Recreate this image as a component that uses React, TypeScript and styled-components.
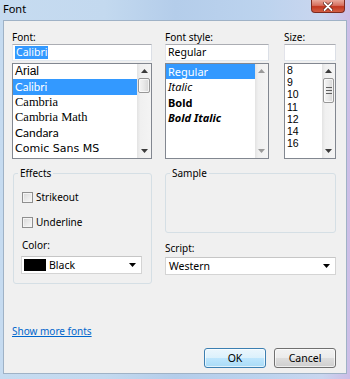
import React from 'react';
import styled, { createGlobalStyle } from 'styled-components';

const GlobalStyle = createGlobalStyle`
  html, body {
    margin: 0;
    padding: 0;
    background: #ffffff;
  }
  body {
    font-family: "Noto Sans", "Open Sans", sans-serif;
    color: #000;
  }
`;

const Window = styled.div`
  width: 350px;
  height: 379px;
  box-sizing: border-box;
  padding: 0 3px 5px 3px;
  display: flex;
  flex-direction: column;
  background: linear-gradient(
    to right,
    #c6dbf0 0%,
    #c3d9ef 30%,
    #b4cdea 50%,
    #bcd3ee 75%,
    #c9d6ef 92%,
    #cdbde6 100%
  );
`;

const TitleBar = styled.div`
  height: 20px;
  flex: none;
  display: flex;
  justify-content: space-between;
  align-items: flex-start;
`;

const Title = styled.div`
  font-size: 11px;
  line-height: 17px;
  color: #000;
`;

const CloseButton = styled.div`
  width: 34px;
  height: 13px;
  margin-right: 2px;
  box-sizing: border-box;
  border: 1px solid #7d2a20;
  border-top: none;
  border-radius: 0 0 4px 4px;
  background: linear-gradient(#e9a99c 0%, #d7705f 45%, #c2361f 55%, #d35f45 100%);
  display: flex;
  align-items: center;
  justify-content: center;
`;

const Client = styled.div`
  flex: 1;
  box-sizing: border-box;
  border: 1px solid #9fb2c6;
  background: #f0f0f0;
  padding: 10px 10px 5px 8px;
  display: flex;
  flex-direction: column;
`;

const TopRow = styled.div`
  display: flex;
`;

const Column = styled.div<{ $width: number; $gap?: number }>`
  width: ${(p) => p.$width}px;
  margin-right: ${(p) => p.$gap ?? 0}px;
  display: flex;
  flex-direction: column;
`;

const Label = styled.div`
  font-size: 10px;
  line-height: 12px;
  margin-bottom: 1px;
`;

const TextBox = styled.div`
  height: 17px;
  box-sizing: border-box;
  border: 1px solid;
  border-color: #abadb3 #dbdfe6 #e3e9ef #e2e3ea;
  background: #fff;
  padding: 0 2px;
  font-size: 10.5px;
  line-height: 13px;
  display: flex;
  align-items: center;
`;

const Selected = styled.span`
  background: #3399ff;
  color: #fff;
  padding: 0 1px;
  line-height: 13px;
`;

const ListBox = styled.div`
  margin-top: 2px;
  height: 96px;
  box-sizing: border-box;
  border: 1px solid #828790;
  background: #fff;
  display: flex;
  overflow: hidden;
`;

const Items = styled.div`
  flex: 1;
  display: flex;
  flex-direction: column;
`;

const ListItem = styled.div<{ $h: number; $selected?: boolean; $font?: string; $size?: number }>`
  height: ${(p) => p.$h}px;
  line-height: ${(p) => Math.floor(p.$h)}px;
  flex: none;
  display: flex;
  align-items: center;
  padding-left: 2px;
  white-space: nowrap;
  overflow: hidden;
  font-family: ${(p) => p.$font ?? '"Noto Sans", sans-serif'};
  font-size: ${(p) => p.$size ?? 11}px;
  background: ${(p) => (p.$selected ? '#3399ff' : 'transparent')};
  color: ${(p) => (p.$selected ? '#fff' : '#000')};
`;

const ScrollBar = styled.div<{ $width: number }>`
  width: ${(p) => p.$width}px;
  flex: none;
  display: flex;
  flex-direction: column;
  background: linear-gradient(to right, #e3e3e3 0%, #f0f0f0 25%, #f4f4f4 100%);
`;

const ScrollArrow = styled.div`
  height: 14px;
  flex: none;
  display: flex;
  align-items: center;
  justify-content: center;
`;

const Track = styled.div`
  flex: 1;
  display: flex;
  flex-direction: column;
  padding: 0 1px;
`;

const Thumb = styled.div<{ $h: number }>`
  height: ${(p) => p.$h}px;
  box-sizing: border-box;
  border: 1px solid #979797;
  border-radius: 2px;
  background: linear-gradient(to right, #f5f5f5 0%, #e8e8e8 50%, #d6d6d6 100%);
  box-shadow: inset 0 0 0 1px rgba(255, 255, 255, 0.7);
  display: flex;
  flex-direction: column;
  align-items: center;
  justify-content: center;
  gap: 2px;
`;

const Grip = styled.div`
  width: 6px;
  height: 1px;
  background: #606060;
`;

const BottomRow = styled.div`
  display: flex;
  align-items: flex-start;
  margin-top: 8px;
`;

const Group = styled.fieldset<{ $width: number; $height: number }>`
  margin: 0;
  width: ${(p) => p.$width}px;
  height: ${(p) => p.$height}px;
  box-sizing: border-box;
  border: 1px solid #d5dfe5;
  border-radius: 3px;
  padding: 0 8px 9px 8px;
  display: flex;
  flex-direction: column;
`;

const Legend = styled.legend`
  font-size: 10px;
  line-height: 12px;
  padding: 0 2px;
  margin-left: -4px;
`;

const CheckRow = styled.div<{ $top: number }>`
  display: flex;
  align-items: center;
  height: 14px;
  line-height: 12px;
  margin-top: ${(p) => p.$top}px;
  font-size: 10px;
  gap: 3px;
`;

const CheckBox = styled.div`
  width: 11px;
  height: 11px;
  box-sizing: border-box;
  border: 1px solid #8f8f8f;
  background: linear-gradient(135deg, #d8d8d8 0%, #e9e9e9 50%, #f8f8f8 100%);
  box-shadow: inset 0 0 0 1px #f4f4f4;
`;

const FieldLabel = styled(Label)<{ $top: number }>`
  margin-top: ${(p) => p.$top}px;
`;

const Combo = styled.div<{ $width?: number }>`
  height: 18px;
  width: ${(p) => (p.$width ? `${p.$width}px` : 'auto')};
  margin-top: 2px;
  box-sizing: border-box;
  border: 1px solid #d4d4d4;
  border-top-color: #c6c6c6;
  background: #fff;
  display: flex;
  align-items: center;
  padding: 0 5px 0 2px;
  font-size: 10.5px;
  line-height: 13px;
`;

const ComboText = styled.span`
  flex: 1;
  margin-left: 3px;
`;

const Swatch = styled.div`
  width: 22px;
  height: 12px;
  background: #000;
`;

const RightColumn = styled.div`
  width: 171px;
  margin-left: 13px;
  display: flex;
  flex-direction: column;
`;

const MoreLink = styled.a`
  margin-top: auto;
  margin-bottom: 11px;
  align-self: flex-start;
  font-size: 10px;
  line-height: 12px;
  color: #0066cc;
  text-decoration: underline;
  cursor: pointer;
`;

const ButtonRow = styled.div`
  display: flex;
  justify-content: flex-end;
  gap: 8px;
`;

const Button = styled.button<{ $default?: boolean }>`
  width: 62px;
  height: 20px;
  margin: 0;
  padding: 0;
  box-sizing: border-box;
  border-radius: 3px;
  font-family: "Noto Sans", sans-serif;
  font-size: 10.5px;
  line-height: 13px;
  color: #000;
  border: 1px solid ${(p) => (p.$default ? '#3c7fb1' : '#707070')};
  background: ${(p) =>
    p.$default
      ? 'linear-gradient(#ebf6fd 0%, #dbf1fc 50%, #bee6fd 51%, #a9dbf6 100%)'
      : 'linear-gradient(#f2f2f2 0%, #ebebeb 50%, #dddddd 51%, #cfcfcf 100%)'};
  box-shadow: inset 0 0 0 1px rgba(255, 255, 255, 0.65);
`;

const ArrowUp = ({ color = '#3c3c3c' }: { color?: string }) => (
  <svg width="7" height="4" viewBox="0 0 7 4">
    <polygon points="0,4 3.5,0 7,4" fill={color} />
  </svg>
);

const ArrowDown = ({ color = '#3c3c3c' }: { color?: string }) => (
  <svg width="7" height="4" viewBox="0 0 7 4">
    <polygon points="0,0 7,0 3.5,4" fill={color} />
  </svg>
);

function VScroll({ width, thumb, grip, arrowColor }: { width: number; thumb?: number; grip?: boolean; arrowColor?: string }) {
  return (
    <ScrollBar $width={width}>
      <ScrollArrow>
        <ArrowUp color={arrowColor} />
      </ScrollArrow>
      <Track>
        {thumb ? (
          <Thumb $h={thumb}>
            {grip && (
              <>
                <Grip />
                <Grip />
                <Grip />
              </>
            )}
          </Thumb>
        ) : null}
      </Track>
      <ScrollArrow>
        <ArrowDown color={arrowColor} />
      </ScrollArrow>
    </ScrollBar>
  );
}

const fontList = [
  { name: 'Arial', font: '"Liberation Sans", Arial, sans-serif', size: 12 },
  { name: 'Calibri', font: 'Lato, "Open Sans", sans-serif', size: 11.5 },
  { name: 'Cambria', font: '"Liberation Serif", serif', size: 12.5 },
  { name: 'Cambria Math', font: '"Liberation Serif", serif', size: 12.5 },
  { name: 'Candara', font: 'Lato, sans-serif', size: 12 },
  { name: 'Comic Sans MS', font: '"DejaVu Sans", sans-serif', size: 11 },
];

const styleList = [
  { name: 'Regular', weight: 400, italic: false },
  { name: 'Italic', weight: 400, italic: true },
  { name: 'Bold', weight: 700, italic: false },
  { name: 'Bold Italic', weight: 700, italic: true },
];

const StyleItem = styled(ListItem)<{ $weight: number; $italic: boolean }>`
  font-weight: ${(p) => p.$weight};
  font-style: ${(p) => (p.$italic ? 'italic' : 'normal')};
`;

const sizeList = ['8', '9', '10', '11', '12', '14', '16'];

export default function App() {
  return (
    <>
      <GlobalStyle />
      <Window>
        <TitleBar>
          <Title>Font</Title>
          <CloseButton>
            <svg width="10" height="9" viewBox="0 0 10 9">
              <path d="M1.5 1 L8.5 8 M8.5 1 L1.5 8" stroke="#5a1810" strokeWidth="3.2" strokeLinecap="round" />
              <path d="M1.5 1 L8.5 8 M8.5 1 L1.5 8" stroke="#ffffff" strokeWidth="1.8" strokeLinecap="round" />
            </svg>
          </CloseButton>
        </TitleBar>
        <Client>
          <TopRow>
            <Column $width={140} $gap={13}>
              <Label>Font:</Label>
              <TextBox>
                <Selected>Calibri</Selected>
              </TextBox>
              <ListBox>
                <Items>
                  {fontList.map((f) => (
                    <ListItem key={f.name} $h={15.3} $font={f.font} $size={f.size} $selected={f.name === 'Calibri'}>
                      {f.name}
                    </ListItem>
                  ))}
                </Items>
                <VScroll width={14} thumb={15} />
              </ListBox>
            </Column>
            <Column $width={104} $gap={15}>
              <Label>Font style:</Label>
              <TextBox>Regular</TextBox>
              <ListBox>
                <Items>
                  {styleList.map((s) => (
                    <StyleItem
                      key={s.name}
                      $h={15.3}
                      $size={11}
                      $weight={s.weight}
                      $italic={s.italic}
                      $selected={s.name === 'Regular'}
                    >
                      {s.name}
                    </StyleItem>
                  ))}
                </Items>
                <VScroll width={13} arrowColor="#9a9a9a" />
              </ListBox>
            </Column>
            <Column $width={52}>
              <Label>Size:</Label>
              <TextBox />
              <ListBox>
                <Items>
                  {sizeList.map((s) => (
                    <ListItem key={s} $h={12.2} $size={10.5} $font='"Liberation Sans", Arial, sans-serif'>
                      {s}
                    </ListItem>
                  ))}
                </Items>
                <VScroll width={13} thumb={25} grip />
              </ListBox>
            </Column>
          </TopRow>
          <BottomRow>
            <Group $width={139} $height={117} style={{ marginLeft: 1 }}>
              <Legend>Effects</Legend>
              <CheckRow $top={11}>
                <CheckBox />
                Strikeout
              </CheckRow>
              <CheckRow $top={11}>
                <CheckBox />
                Underline
              </CheckRow>
              <FieldLabel $top={10}>Color:</FieldLabel>
              <Combo $width={121} style={{ marginLeft: -1, marginTop: 4 }}>
                <Swatch />
                <ComboText>Black</ComboText>
                <ArrowDown color="#000" />
              </Combo>
            </Group>
            <RightColumn>
              <Group $width={171} $height={66}>
                <Legend>Sample</Legend>
              </Group>
              <FieldLabel $top={9}>Script:</FieldLabel>
              <Combo>
                <ComboText style={{ marginLeft: 1 }}>Western</ComboText>
                <ArrowDown color="#000" />
              </Combo>
            </RightColumn>
          </BottomRow>
          <MoreLink>Show more fonts</MoreLink>
          <ButtonRow>
            <Button $default>OK</Button>
            <Button>Cancel</Button>
          </ButtonRow>
        </Client>
      </Window>
    </>
  );
}
